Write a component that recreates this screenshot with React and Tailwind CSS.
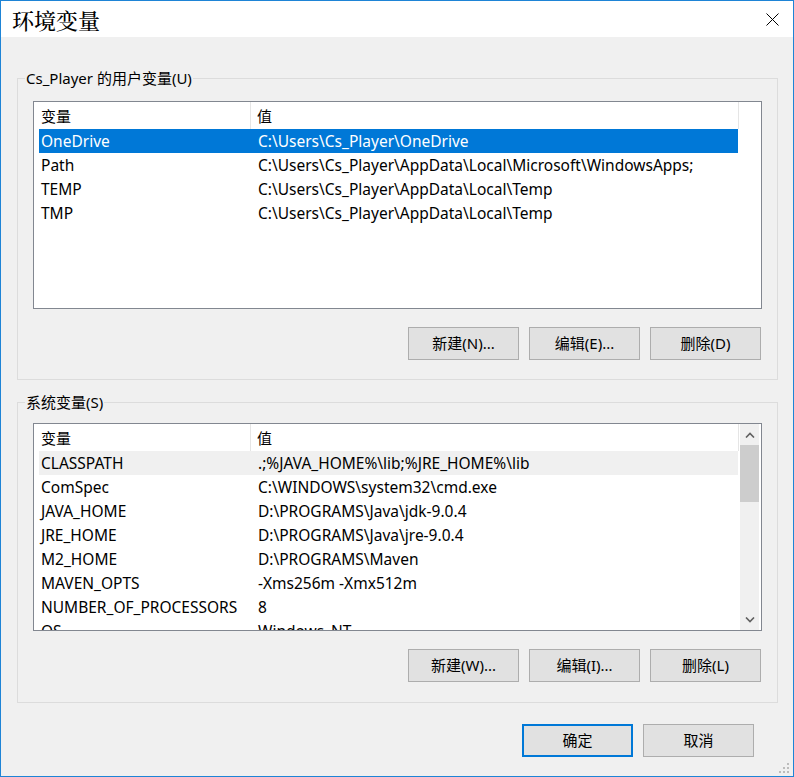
import React from 'react';

const UI_FONT = { fontFamily: '"Segoe UI", "Noto Sans", "Noto Sans CJK SC", sans-serif' };

const userVars = [
  ['OneDrive', 'C:\\Users\\Cs_Player\\OneDrive'],
  ['Path', 'C:\\Users\\Cs_Player\\AppData\\Local\\Microsoft\\WindowsApps;'],
  ['TEMP', 'C:\\Users\\Cs_Player\\AppData\\Local\\Temp'],
  ['TMP', 'C:\\Users\\Cs_Player\\AppData\\Local\\Temp'],
];

const sysVars = [
  ['CLASSPATH', '.;%JAVA_HOME%\\lib;%JRE_HOME%\\lib'],
  ['ComSpec', 'C:\\WINDOWS\\system32\\cmd.exe'],
  ['JAVA_HOME', 'D:\\PROGRAMS\\Java\\jdk-9.0.4'],
  ['JRE_HOME', 'D:\\PROGRAMS\\Java\\jre-9.0.4'],
  ['M2_HOME', 'D:\\PROGRAMS\\Maven'],
  ['MAVEN_OPTS', '-Xms256m -Xmx512m'],
  ['NUMBER_OF_PROCESSORS', '8'],
  ['OS', 'Windows_NT'],
];

const Button = ({ children, primary }) => (
  <button
    className={
      primary
        ? 'w-[111px] h-[33px] bg-[#e1e1e1] border-2 border-[#0078d7] text-[15px] text-black'
        : 'w-[111px] h-[33px] bg-[#e1e1e1] border border-[#adadad] text-[15px] text-black'
    }
  >
    {children}
  </button>
);

const Chevron = ({ up }) => (
  <svg width="10" height="6" viewBox="0 0 10 6">
    <path
      d={up ? 'M1 5.5 L5 1.5 L9 5.5' : 'M1 0.5 L5 4.5 L9 0.5'}
      fill="none"
      stroke="#606060"
      strokeWidth="1.6"
    />
  </svg>
);

const ListView = ({ rows, selected, hover, scroll }) => (
  <div className="h-[208px] border border-[#828790] bg-white flex overflow-hidden">
    <div className="w-[705px] shrink-0">
      <div className="flex h-[27px] text-[15px] text-black">
        <div className="w-[217px] pl-[7px] pt-[1px] flex items-center border-r border-[#e5e5e5]">变量</div>
        <div className="flex-1 pl-[6px] pt-[1px] flex items-center border-r border-[#e5e5e5]">值</div>
      </div>
      <div className="pl-[5px]">
        {rows.map(([name, value], i) => (
          <div
            key={name}
            className={
              i === selected
                ? 'flex h-[24px] w-[699px] pt-[1px] items-center bg-[#0078d7] text-white text-[15.5px]'
                : i === hover
                ? 'flex h-[24px] w-[699px] pt-[1px] items-center bg-[#f0f0f0] text-black text-[15.5px]'
                : 'flex h-[24px] w-[699px] pt-[1px] items-center text-black text-[15.5px]'
            }
          >
            <div className="w-[217px] pl-[2px] whitespace-nowrap">{name}</div>
            <div className="flex-1 pl-[2px] whitespace-nowrap">{value}</div>
          </div>
        ))}
      </div>
    </div>
    {scroll && (
      <div className="ml-[1px] w-[19px] bg-[#f0f0f0] flex flex-col">
        <div className="h-[21px] flex items-center justify-center">
          <Chevron up />
        </div>
        <div className="h-[57px] bg-[#cdcdcd]" />
        <div className="flex-1" />
        <div className="h-[21px] flex items-center justify-center">
          <Chevron />
        </div>
      </div>
    )}
  </div>
);

const Group = ({ label, children, className }) => (
  <fieldset className={'border border-[#dcdcdc] px-[15px] ' + className}>
    <legend className="ml-[-8px] px-[1px] h-[20px] leading-[20px] text-[15px] text-black">{label}</legend>
    {children}
  </fieldset>
);

export default function App() {
  return (
    <div
      className="relative w-[794px] h-[777px] border border-[#1e84d6] bg-[#f0f0f0] flex flex-col overflow-hidden"
      style={UI_FONT}
    >
      <div className="h-[36px] bg-white flex items-center justify-between pl-[11px] pr-[14px]">
        <span
          className="text-[22px] font-medium text-black"
          style={{ fontFamily: '"Noto Serif CJK SC", "Noto Sans CJK SC", serif' }}
        >
          环境变量
        </span>
        <svg width="13" height="13" viewBox="0 0 13 13">
          <path d="M0.5 0.5 L12.5 12.5 M12.5 0.5 L0.5 12.5" stroke="#000" strokeWidth="1" />
        </svg>
      </div>

      <div className="flex-1 pl-[16px] pr-[15px] pt-[31px] flex flex-col">
        <Group label="Cs_Player 的用户变量(U)" className="pb-[19px]">
          <div className="mt-[13px]">
            <ListView rows={userVars} selected={0} />
          </div>
          <div className="mt-[18px] flex justify-end gap-[10px] pr-[1px]">
            <Button>新建(N)...</Button>
            <Button>编辑(E)...</Button>
            <Button>删除(D)</Button>
          </div>
        </Group>

        <Group label="系统变量(S)" className="mt-[12px] pb-[20px]">
          <div className="mt-[11px]">
            <ListView rows={sysVars} hover={0} scroll />
          </div>
          <div className="mt-[18px] flex justify-end gap-[10px] pr-[1px]">
            <Button>新建(W)...</Button>
            <Button>编辑(I)...</Button>
            <Button>删除(L)</Button>
          </div>
        </Group>

        <div className="mt-[21px] flex justify-end gap-[10px] pr-[24px]">
          <Button primary>确定</Button>
          <Button>取消</Button>
        </div>
      </div>

      <svg className="absolute right-[3px] bottom-[2px]" width="12" height="12" viewBox="0 0 12 12">
        <rect x="9" y="1" width="2" height="2" fill="#bcbcbc" />
        <rect x="5" y="5" width="2" height="2" fill="#bcbcbc" />
        <rect x="9" y="5" width="2" height="2" fill="#bcbcbc" />
        <rect x="1" y="9" width="2" height="2" fill="#bcbcbc" />
        <rect x="5" y="9" width="2" height="2" fill="#bcbcbc" />
        <rect x="9" y="9" width="2" height="2" fill="#bcbcbc" />
      </svg>
    </div>
  );
}
